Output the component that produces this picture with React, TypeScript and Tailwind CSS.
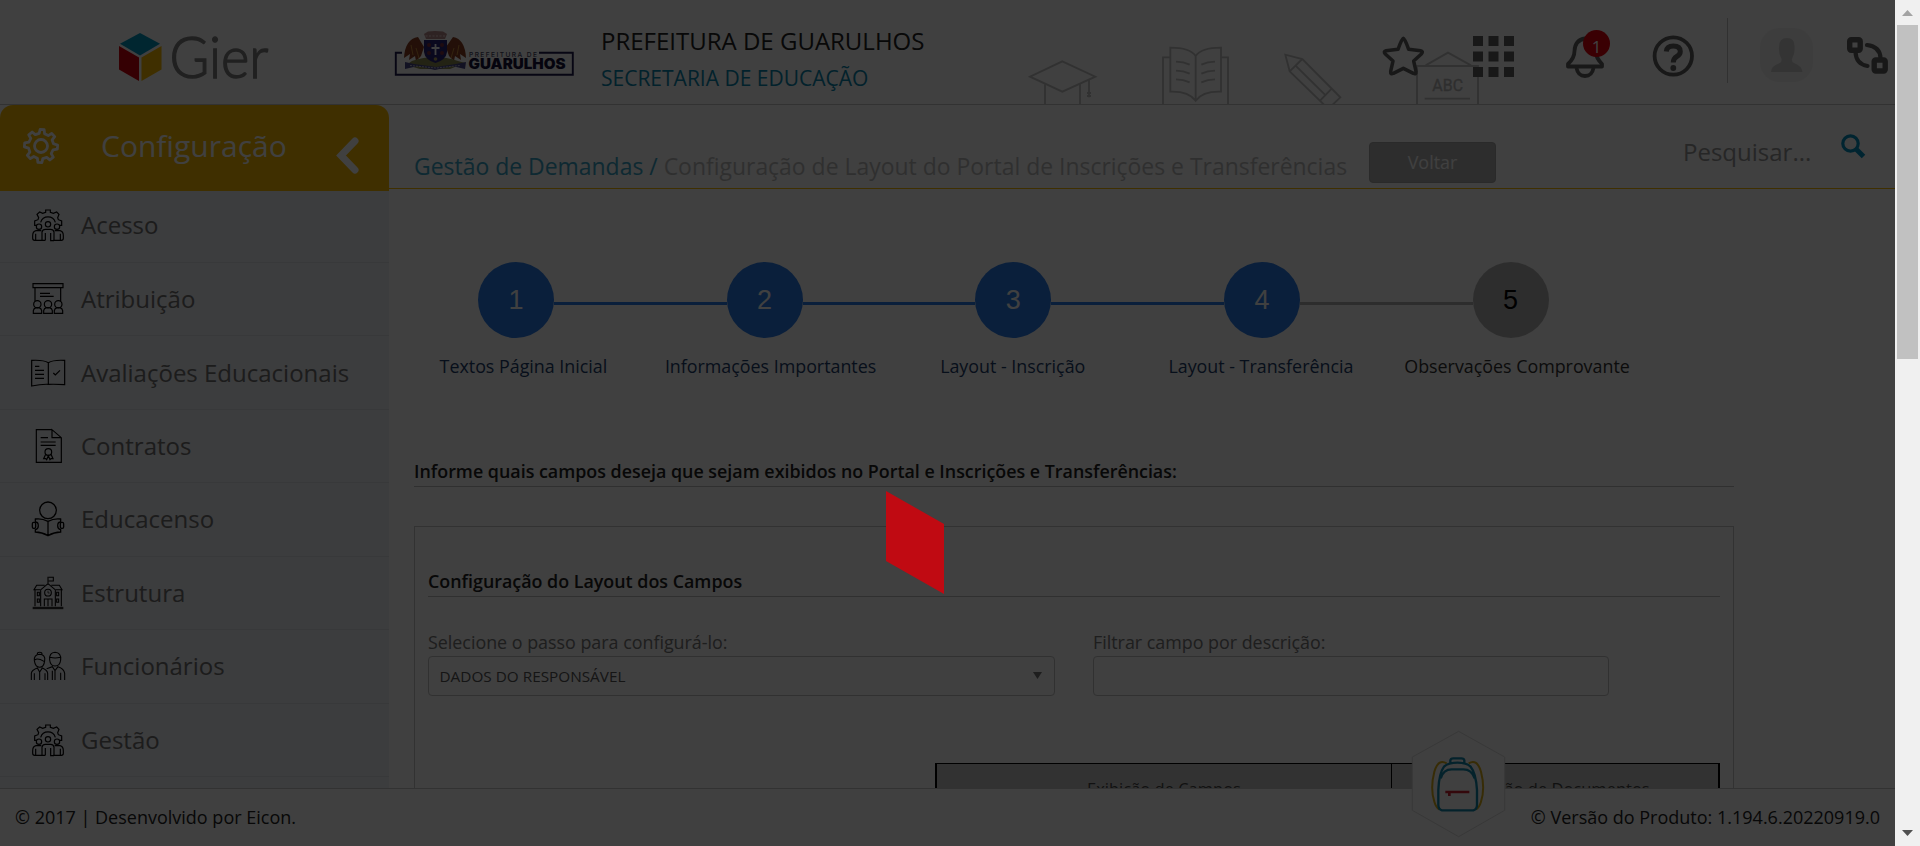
import type { ReactNode } from "react";

function GierLogo() {
  return (
    <svg className="ml-[115px] mt-[16px] h-[84px] w-[170px] shrink-0" viewBox="115 16 170 84">
      <path d="M140 33 160 43.7 140 55.5 120 43.7Z" fill="#0098c0" />
      <path d="M119 46 139 57.5V81L119 69.5Z" fill="#d4000c" />
      <path d="M161.5 46 141.5 57.5V81L161.5 69.5Z" fill="#f9bc00" />
      <text x="169.5" y="78" fontFamily="Lato, sans-serif" fontWeight="300" fontSize="58" fill="#808080" stroke="#808080" strokeWidth="1.4" textLength="99" lengthAdjust="spacingAndGlyphs">
        Gier
      </text>
    </svg>
  );
}

function CityLogo() {
  return (
    <svg className="ml-[108px] mt-[30px] h-[48px] w-[184px] shrink-0" viewBox="393 30 184 48">
      <path d="M402 52.8H395.8V74.8H572.8V52.8H539" fill="none" stroke="#1c1a4e" strokeWidth="1.9" />
      <path d="M418 37Q405 39 404 58L410 54 409 60 415 56 416 61 421 56 424 47Z" fill="#8a3f22" />
      <path d="M453 37Q465 39 466 58L460 54 461 60 455 56 454 61 449 56 446 47Z" fill="#8a3f22" />
      <path d="M416 48 419 58M454 48 451 58M411 45 413 55M459 45 457 55" stroke="#c98a3a" strokeWidth="1" />
      <path d="M412 61Q435 53 458 61L465 63 450 69H420L406 65Z" fill="#8a8a50" />
      <path d="M405 62 414 64 436 67 456 64 466 62 465 69 452 66 435 70 418 66 405 69Z" fill="#4a4a8c" />
      <path d="M410 65.500 436 68 460 65.500" fill="none" stroke="#b9b9cf" strokeWidth="1" strokeDasharray="2 1" />
      <path d="M424 40H447V52Q446 60 435.500 63 425 60 424 52Z" fill="#2b2478" />
      <path d="M424 34 428 31.500 435 31 443 31.500 447 34 445 39H426Z" fill="#b98a8a" />
      <path d="M425.500 36H446" stroke="#e8d8d8" strokeDasharray="2 1.500" />
      <g fill="#7d3040">
        <circle cx="429" cy="45" r="2" /><circle cx="442" cy="45" r="2" />
        <circle cx="429" cy="53" r="2" /><circle cx="442" cy="53" r="2" />
      </g>
      <path d="M435.500 44V55M431.500 48H439.500" stroke="#fff" strokeWidth="1.800" />
      <circle cx="435.500" cy="59" r="1.800" fill="#b0a060" />
      <text x="469" y="56.600" fontFamily="Inter, sans-serif" fontWeight="500" fontSize="6.600" fill="#44435f" textLength="68">PREFEITURA DE</text>
      <text x="468.500" y="69.300" fontFamily="Inter, sans-serif" fontWeight="900" fontSize="14.500" fill="#141238" textLength="97" lengthAdjust="spacingAndGlyphs">GUARULHOS</text>
    </svg>
  );
}

function SchoolDoodles() {
  return (
    <svg className="absolute left-[980px] top-0 h-[104px] w-[500px]" viewBox="0 0 1500 312" fill="none" stroke="#c2c2c2" strokeWidth="5.500">
      <path d="M247 184 346 230 247 275 150 230ZM195 252V312M300 252V312M327 240V292M321 279H333M321 288H333" />
      <path d="M570 172H549V312M723 172H744V312" />
      <path d="M647 168Q630 143 571 143V275Q625 273 647 302Q668 273 723 275V143Q664 143 647 168V302" />
      <path d="M588 185Q610 185 629 194M588 212Q610 212 629 221M588 238Q610 238 629 247M705 185Q683 185 664 194M705 212Q683 212 664 221M705 238Q683 238 664 247" />
      <path d="M1032 314 929 214 916 164 967 177 1081 292 1058 314M929 214 967 177M946 196 1037 286M1018 304 1055 266" />
      <path d="M1311 312V198H1494V312M1337 196 1404 158 1473 196M1334 296H1470" />
      <text x="1357" y="273" fontFamily="Roboto, sans-serif" fontWeight="400" fontSize="52" fill="#b8b8b8" stroke="#b8b8b8" strokeWidth="1" textLength="92" lengthAdjust="spacingAndGlyphs">ABC</text>
    </svg>
  );
}

function TeamGear() {
  return (
    <svg className="size-9" viewBox="90 52 108 108" fill="none" stroke="#000" strokeWidth="3.500">
      <path d="M110 107H104V94L114 90 116 84 111 74 119 67 128 71 137 68V61H151V68L160 71 170 67 177 74 173 84 175 90 185 94V107H178" />
      <path d="M122 98A23 23 0 0 1 166 98" />
      <circle cx="144" cy="104" r="8" /><circle cx="117" cy="111" r="8" /><circle cx="171" cy="111" r="8" />
      <path d="M126 152V127Q128 119 136 119H152Q160 119 162 127V152M136 130V152M152 130V153H162" />
      <path d="M124 123H108Q98 125 98 138V146Q98 152 104 152H136M107 132V150M164 123H180Q190 125 190 138V146Q190 152 184 152H160M181 132V150" />
    </svg>
  );
}

function ClassroomIcon() {
  return (
    <svg className="size-9" viewBox="90 273 108 108" fill="none" stroke="#000" strokeWidth="3.500">
      <path d="M99 281H189V293H99ZM105 293V334M182 293V334M120 310H150M120 319H161" />
      <circle cx="112" cy="343" r="11" /><circle cx="144" cy="343" r="11" /><circle cx="175" cy="343" r="11" />
      <path d="M100 370V362Q101 355 108 353H117Q124 355 125 362V370ZM131 370V362Q132 355 139 353H149Q156 355 157 362V370ZM163 370V362Q164 355 171 353H180Q187 355 188 362V370Z" />
    </svg>
  );
}

function AssessmentIcon() {
  return (
    <svg className="size-9" viewBox="90 492 108 108" fill="none" stroke="#000" strokeWidth="3.500">
      <path d="M145 515Q130 506 95 508V585Q125 579 145 580ZM145 515Q160 506 194 508V581Q165 579 145 580" />
      <path d="M105 526H118M105 538H132M105 550H132M105 562H132M160 546 166 552 180 538" />
    </svg>
  );
}

function ContractIcon() {
  return (
    <svg className="size-9" viewBox="90 715 108 108" fill="none" stroke="#000" strokeWidth="3.500">
      <path d="M156 720H109V818H184V744L156 720V744H184M122 744H144M122 757H167M122 767H167" />
      <circle cx="145" cy="787" r="10" />
      <path d="M137 794 131 807H137L140 810 145 798 150 810 153 807H159L153 794" />
    </svg>
  );
}

function ReaderIcon() {
  return (
    <svg className="size-9" viewBox="90 -27 108 108" fill="none" stroke="#000" strokeWidth="3.800">
      <circle cx="144" cy="1" r="25" />
      <path d="M144 34Q125 24 106 27V36Q115 36 115 47Q115 57 106 59V66Q125 66 144 77Q163 66 182 66V59Q173 57 173 47Q173 36 182 36V27Q163 24 144 34V77" />
      <rect x="97" y="37" width="10" height="18" rx="4" /><rect x="181" y="37" width="10" height="18" rx="4" />
    </svg>
  );
}

function SchoolIcon() {
  return (
    <svg className="size-9" viewBox="90 196 108 108" fill="none" stroke="#000" strokeWidth="3.200">
      <path d="M144 222V201M146 203H160V214H146M120 242 144 222 168 242M120 240H102L110 227H134M168 240H186L178 227H154" />
      <path d="M105 240V290M184 240V290M122 242V290M166 242V290M133 290V268H156V290M144 268V290" />
      <circle cx="144" cy="249" r="10" /><path d="M144 243V250H149" strokeWidth="2" />
      <path d="M112 248H118V258H112ZM112 268H118V278H112ZM170 248H176V258H170ZM170 268H176V278H170Z" />
      <path d="M98 295H190" stroke="#333" strokeWidth="7" />
    </svg>
  );
}

function StaffIcon() {
  return (
    <svg className="size-9" viewBox="90 414 108 108" fill="none" stroke="#000" strokeWidth="3.200">
      <path d="M103 452Q101 434 119 433Q137 434 134 452Q132 472 119 472Q106 472 103 452ZM112 432Q112 427 119 427Q126 427 126 432M104 450Q112 442 132 454" />
      <path d="M94 510V490Q95 480 112 474L119 486 127 474Q142 480 143 490V510M103 490V510M135 490V510M119 486V510" />
      <path d="M149 450Q147 428 165 427Q184 428 182 450Q180 468 165 468Q151 468 149 450ZM150 442Q165 446 181 442" />
      <path d="M140 476 157 470 165 482 174 470Q192 476 194 490V510M157 482V510M182 488V510M165 482V510" />
    </svg>
  );
}

const menu: { label: string; icon: ReactNode }[] = [
  { label: "Acesso", icon: <TeamGear /> },
  { label: "Atribuição", icon: <ClassroomIcon /> },
  { label: "Avaliações Educacionais", icon: <AssessmentIcon /> },
  { label: "Contratos", icon: <ContractIcon /> },
  { label: "Educacenso", icon: <ReaderIcon /> },
  { label: "Estrutura", icon: <SchoolIcon /> },
  { label: "Funcionários", icon: <StaffIcon /> },
  { label: "Gestão", icon: <TeamGear /> },
];

function Header() {
  return (
    <header className="relative flex h-[105px] shrink-0 items-start border-b border-[#c8c8c8]">
      <SchoolDoodles />
      <GierLogo />
      <CityLogo />
      <div className="ml-[24px] mt-[25px] whitespace-nowrap">
        <div className="text-[24px] leading-8 text-[#222]">PREFEITURA DE GUARULHOS</div>
        <div className="mt-[5px] text-[21px] leading-8 text-[#0a86ae]">SECRETARIA DE EDUCAÇÃO</div>
      </div>
      <div className="relative ml-auto flex items-start">
        <svg className="mt-[36px] h-[41px] w-[43px]" viewBox="1206 108 129 123" fill="none" stroke="#606060" strokeWidth="10.500" strokeLinejoin="round">
          <path d="M1270 115Q1274 115 1286 148L1322 152Q1331 154 1324 162L1301 183 1308 214Q1309 225 1300 220L1270 205 1240 220Q1231 225 1232 214L1239 183 1216 162Q1209 154 1218 152L1254 148Q1266 115 1270 115Z" />
        </svg>
        <svg className="ml-[48px] mt-[36px] h-[41px] w-[41px]" viewBox="0 0 41 41" fill="#606060">
          <path d="M0 0H10V10H0ZM15.500 0H25.500V10H15.500ZM31 0H41V10H31ZM0 15.500H10V25.500H0ZM15.500 15.500H25.500V25.500H15.500ZM31 15.500H41V25.500H31ZM0 31H10V41H0ZM15.500 31H25.500V41H15.500ZM31 31H41V41H31Z" />
        </svg>
        <div className="relative ml-[51px] mt-[36px] h-[42px] w-[40px]">
          <svg className="size-full" viewBox="0 0 40 42" fill="none" stroke="#606060" strokeWidth="3.800" strokeLinejoin="round">
            <path d="M20 2.500Q10 4 9.500 15Q9.500 22 3 28V30.500H37V28Q31 22 30.500 15Q30 4 20 2.500Z" />
            <path d="M11.500 32Q13 40 20 40Q27 40 28.500 32" />
          </svg>
          <span className="absolute -top-[6px] left-[18px] flex size-[27px] items-center justify-center rounded-full bg-[#e8000c] pt-[5px] text-[17px] leading-none text-white">1</span>
        </div>
        <svg className="ml-[47px] mt-[35px] size-[42px]" viewBox="0 0 42 42" fill="none" stroke="#606060">
          <circle cx="21.300" cy="21" r="18.700" strokeWidth="3.800" />
          <path d="M14.300 16.500Q14.800 11 21.300 11Q28.300 11 28.300 16.500Q28.300 19.500 24.800 21.500Q21.300 23.500 21.300 27.500" strokeWidth="5" />
          <circle cx="21.300" cy="33" r="2.900" fill="#606060" stroke="none" />
        </svg>
        <div className="ml-[33px] mt-[18px] h-[65px] w-px bg-[#c4c4c4]" />
        <svg className="ml-[32px] mt-[28px] h-[54px] w-[53px]" viewBox="0 0 53 54">
          <rect width="53" height="54" rx="20" fill="#f2f2f2" />
          <path d="M11 44Q11 38 20 35Q22 34 21.500 31Q18.500 26 19 19Q19 10 27 10Q35 10 34.500 19Q35 26 32 31Q31.500 34 34 35Q42 38 42.500 44Z" fill="#cfcfcf" />
        </svg>
        <svg className="ml-[34px] mr-[7px] mt-[37px] h-[37px] w-[41px]" viewBox="0 0 41 37" fill="none" stroke="#606060" strokeWidth="4.200">
          <rect x="2.700" y="2.700" width="10.500" height="10.500" rx="1.500" strokeWidth="5.400" />
          <rect x="27.200" y="23" width="11" height="11" rx="1.500" strokeWidth="5.400" />
          <path d="M8.500 15Q9 27 20.500 29M20 8Q33 9.500 33.500 21" strokeLinecap="round" />
        </svg>
      </div>
    </header>
  );
}

function Sidebar() {
  return (
    <aside className="w-[389px] shrink-0 overflow-hidden bg-[#eff1f5]">
      <nav>
        <div className="bg-[#fdfdfd]">
          <div className="flex h-[86px] items-start rounded-t-[13px] bg-[#f9bc00]">
            <svg className="ml-[23px] mt-[23px] size-[36px]" viewBox="0 0 36 36" fill="none" stroke="#fff" strokeWidth="2.800" strokeLinejoin="round">
              <g transform="rotate(4 18 18)">
                <path d="M15.300 5.500 16 1.500H20L20.700 5.500 24.500 7.100 27.800 4.700 31 7.700 28.700 11.200 30.300 14.900 34.500 16V20L30.300 21 28.700 24.800 31 28.200 27.800 31.300 24.500 29 20.700 30.500 20 34.500H16L15.300 30.500 11.500 29 8.200 31.300 5 28.200 7.300 24.800 5.700 21 1.500 20V16L5.700 14.900 7.300 11.200 5 7.700 8.200 4.700 11.500 7.100Z" />
              </g>
              <circle cx="18" cy="18" r="6.500" />
            </svg>
            <span className="ml-[42px] mt-[21px] w-[185px] whitespace-nowrap text-[30px] leading-10 text-white">Configuração</span>
            <svg className="ml-[50px] mt-[32px] h-[37px] w-[24px]" viewBox="0 0 24 37" fill="none" stroke="#fff" strokeWidth="7" strokeLinecap="round">
              <path d="M19 4 5 18.500 19 33" />
            </svg>
          </div>
        </div>
        {menu.map((m, i) => (
          <div key={m.label} className={`flex items-center border-b border-[#dfe1e6] pl-[30px] ${i === 0 ? "h-[72px] pb-[3px]" : "h-[73.430px]"}`}>
            {m.icon}
            <span className="ml-[15px] whitespace-nowrap text-[24px] leading-8 text-[#6f6f6f]">{m.label}</span>
          </div>
        ))}
      </nav>
    </aside>
  );
}

function Step({ n, label, shift, left, right, active = true }: { n: number; label: string; shift: string; left: string; right: string; active?: boolean }) {
  return (
    <div className="w-[248.670px] shrink-0">
      <div className="flex items-start">
        <div className={`mt-[40px] h-[3px] flex-1 ${left}`} />
        <div className={`flex size-[76px] items-center justify-center rounded-full pt-[1px] font-['Liberation_Sans',sans-serif] text-[27px] ${active ? "bg-[#297bea] text-white" : "bg-[#b4b4b4] text-black"}`}>{n}</div>
        <div className={`mt-[40px] h-[3px] flex-1 ${right}`} />
      </div>
      <div className={`mt-[16px] flex justify-center whitespace-nowrap text-[17.85px] leading-6 ${shift} ${active ? "text-[#1d3f6c]" : "text-[#333]"}`}>{label}</div>
    </div>
  );
}

function Content() {
  const blue = "bg-[#297bea]";
  const gray = "bg-[#b4b4b4]";
  return (
    <main className="min-w-0 flex-1 overflow-hidden">
      <div className="flex h-[84px] items-start whitespace-nowrap border-b border-[#f9bc00] pl-[25px]">
        <h1 className="mt-[45px] w-[955px] text-[22.95px] leading-8 text-[#bdbdbd]">
          <span className="text-[#3aa5c6]">Gestão de Demandas /</span> Configuração de Layout do Portal de Inscrições e Transferências
        </h1>
        <button className="mt-[37px] h-[41px] w-[127px] rounded-[4px] border border-[#a6a6a6] bg-[#b4b4b4] text-[17.9px] text-white">Voltar</button>
        <span className="ml-[187px] mt-[31px] w-[158px] text-[24px] leading-8 text-[#999]">Pesquisar...</span>
        <svg className="mt-[29px] size-[25px]" viewBox="0 0 25 25" fill="none" stroke="#008fbe">
          <circle cx="9.500" cy="9.500" r="7.700" strokeWidth="3.200" />
          <path d="M15 15 22.500 22.500" strokeWidth="5" />
        </svg>
      </div>
      <div className="ml-[2.600px] mt-[73px] flex">
        <Step n={1} label="Textos Página Inicial" shift="pl-[15px]" left="bg-transparent" right={blue} />
        <Step n={2} label="Informações Importantes" shift="pl-[12px]" left={blue} right={blue} />
        <Step n={3} label="Layout - Inscrição" shift="pr-[1px]" left={blue} right={blue} />
        <Step n={4} label="Layout - Transferência" shift="pr-[2px]" left={blue} right={gray} />
        <Step n={5} label="Observações Comprovante" shift="pl-[13px]" left={gray} right="bg-transparent" active={false} />
      </div>
      <div className="ml-[25px] mt-[81px] w-[1320px]">
        <h2 className="h-[28px] border-b border-[#c0c0c0] text-[17.86px] font-semibold leading-6 text-[#222]">
          Informe quais campos deseja que sejam exibidos no Portal e Inscrições e Transferências:
        </h2>
        <section className="mt-[39px] h-[330px] border border-[#c8c8c8] px-[13px]">
          <h3 className="mt-[42px] h-[28px] border-b border-[#c0c0c0] text-[17.86px] font-semibold leading-6 text-[#222]">Configuração do Layout dos Campos</h3>
          <div className="mt-[33px] flex">
            <div className="w-[627px]">
              <label className="block text-[17.86px] leading-6 text-[#777]">Selecione o passo para configurá-lo:</label>
              <div className="mt-[2px] flex h-[40px] items-center justify-between rounded-[4px] border border-[#c4c4c4] pl-[10.5px] pr-[12.5px]">
                <span className="text-[15.320px] text-[#555]">DADOS DO RESPONSÁVEL</span>
                <svg className="mb-[2px] h-[7px] w-[9px]" viewBox="0 0 9 7" fill="#777"><path d="M0 0H9L4.500 7Z" /></svg>
              </div>
            </div>
            <div className="ml-[38px] w-[516px]">
              <label className="block text-[17.86px] leading-6 text-[#777]">Filtrar campo por descrição:</label>
              <div className="mt-[2px] h-[40px] rounded-[4px] border border-[#c4c4c4]" />
            </div>
          </div>
          <div className="ml-[507px] mt-[67px] flex h-[60px] border-x-2 border-t border-black bg-[#c8c8c8] text-center text-[16.5px] leading-6 text-[#444]">
            <div className="w-[455px] border-r border-black pt-[13px]">Exibição de Campos</div>
            <div className="flex-1 pt-[13px]">Exibição de Documentos</div>
          </div>
        </section>
      </div>
    </main>
  );
}

function BackpackBadge() {
  return (
    <svg className="absolute left-[1410px] top-[730px] h-[109px] w-[97px]" viewBox="90 60 291 327" fill="none">
      <path d="M236 64 374 141V301L236 380 97 301V141Z" fill="#fdfdfd" stroke="#dedede" strokeWidth="3" />
      <path d="M200 160Q175 145 163 185Q150 235 163 275Q168 292 178 298M266 160Q291 145 303 185Q316 235 303 275Q298 292 288 298" stroke="#dcae18" strokeWidth="6" />
      <path d="M186 301Q175 298 175 285V240Q177 190 192 170Q204 158 232 158Q260 158 272 170Q288 190 291 240V285Q291 298 280 301ZM211 158V151Q212 145 220 145H244Q252 145 253 151V158M182 205Q190 178 215 178H250Q275 178 284 205" stroke="#1087ad" strokeWidth="7" />
      <path d="M196 246H268M208 248V258" stroke="#cf2030" strokeWidth="8" />
    </svg>
  );
}

export default function App() {
  return (
    <div className="flex h-[846px] w-full overflow-hidden bg-[#f0f0f0] font-['Open_Sans',sans-serif]">
      <div className="relative flex w-[1895px] shrink-0 flex-col overflow-hidden bg-[#fdfdfd]">
        <Header />
        <div className="flex h-[683px] shrink-0">
          <Sidebar />
          <Content />
        </div>
        <footer className="flex h-[58px] shrink-0 items-center justify-between border-t border-[#c8c8c8] pb-[2px] pl-[15px] pr-[15px] text-[18px] leading-6 text-[#222]">
          <span>© 2017 | Desenvolvido por Eicon.</span>
          <span>© Versão do Produto: 1.194.6.20220919.0</span>
        </footer>
        <BackpackBadge />
        <div className="absolute inset-0 bg-black/75" />
        <svg className="absolute left-[886px] top-[491px] h-[103px] w-[58px]" viewBox="0 0 58 103">
          <path d="M0 0 58 33V103L0 70Z" fill="#c00a12" />
        </svg>
      </div>
      <div className="flex flex-1 flex-col items-center">
        <svg className="mt-[10px] h-[6px] w-[11px]" viewBox="0 0 11 6" fill="#a3a3a3"><path d="M5.500 0 11 6H0Z" /></svg>
        <div className="mt-[9px] h-[334px] w-[21px] bg-[#c1c1c1]" />
        <svg className="mb-[10px] mt-auto h-[6px] w-[11px]" viewBox="0 0 11 6" fill="#505050"><path d="M0 0H11L5.500 6Z" /></svg>
      </div>
    </div>
  );
}
